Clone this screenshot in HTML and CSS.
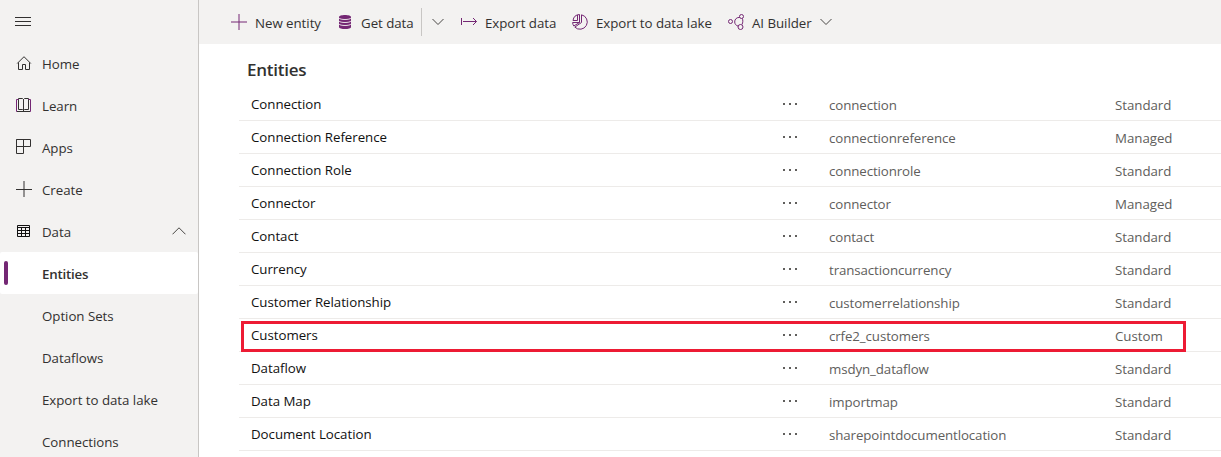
FILE: index.html
```
<!DOCTYPE html>
<html lang="en">
<head>
<meta charset="utf-8">
<title>Entities</title>
<link rel="stylesheet" href="styles.css">
</head>
<body>
<div class="app">
  <nav class="sidebar">
    <div class="menu-toggle"><svg width="16" height="10" viewBox="0 0 16 10"><path d="M0 .5h16M0 4.5h16M0 8.5h16"/></svg></div>
    <a class="nav-item"><svg class="nav-icon" viewBox="0 0 16 16"><path d="M1.200 8.500 8 1.700l6.800 6.800M2.500 7.500v7h4v-5h3v5h4v-7"/></svg><span>Home</span></a>
    <a class="nav-item"><svg class="nav-icon" viewBox="0 0 16 16"><path class="ink" d="M2.500 1.500h4l1 1 1-1h4v11h-4l-1 1-1-1h-4zM7.500 2v12"/><path class="accent" d="M2.500 2.500h-2v12h14v-12h-2"/><path class="ink" d="M1 14.500h13"/></svg><span>Learn</span></a>
    <a class="nav-item"><svg class="nav-icon" viewBox="0 0 16 16"><path d="M.5.5h14v7H.5zM7.500.5v14h-7V.5"/></svg><span>Apps</span></a>
    <a class="nav-item"><svg class="nav-icon" viewBox="0 0 16 16"><path d="M0 8.500h16M8 0v16"/></svg><span>Create</span></a>
    <a class="nav-item"><svg class="nav-icon dark" viewBox="0 0 16 16"><path d="M1.500 2.500h12v11h-12zM1 4.500h13M1 7.500h13M1 10.500h13M5.500 4v9M9.500 4v9"/></svg><span>Data</span><svg class="nav-chevron" width="14" height="8" viewBox="0 0 14 8"><path d="M.5 7.300 7 .8l6.500 6.500"/></svg></a>
    <a class="nav-item selected"><span>Entities</span></a>
    <a class="nav-item child"><span>Option Sets</span></a>
    <a class="nav-item child"><span>Dataflows</span></a>
    <a class="nav-item child"><span>Export to data lake</span></a>
    <a class="nav-item child"><span>Connections</span></a>
  </nav>
  <main class="main">
    <header class="toolbar">
      <button class="command new"><svg viewBox="0 0 16 16"><path d="M0 8h16M8 0v16"/></svg><span>New entity</span></button>
      <button class="command get"><svg viewBox="0 0 16 16"><path class="solid" d="M2 3c0-2.700 12-2.700 12 0v10c0 2.700-12 2.700-12 0z"/><path class="gap" d="M2 4c1 2 11 2 12 0M2 7c1 2 11 2 12 0M2 10c1 2 11 2 12 0"/></svg><span>Get data</span></button>
      <button class="split"><svg class="chevron" viewBox="0 0 12 8"><path d="M.5 1 6 6.500 11.500 1"/></svg></button>
      <button class="command export"><svg viewBox="0 0 16 16"><path d="M.5 4v7M2 7.500h13.500M12 4l3.500 3.500L12 11"/></svg><span>Export data</span></button>
      <button class="command lake"><svg viewBox="0 0 16 16"><path d="M9.500.8a7.300 7.300 0 1 1-6.700 12.300L9.500 8.500zM7.500.5v8l-5.700 3.500A7 7 0 0 1 .6 8.500h6.900M7.500.5A7 7 0 0 0 1 6.500h4.500V1"/></svg><span>Export to data lake</span></button>
      <button class="command builder"><svg viewBox="0 0 16 16"><circle cx="2.500" cy="7.500" r="2"/><circle cx="13.500" cy="2.500" r="2"/><circle cx="12.500" cy="13" r="2.500"/><path d="M11.700 3.500A4.300 4.300 0 0 0 6.700 8c0 2 1.300 3.500 3.500 4.200M14.300 4.400c.8 1.800.7 4-.3 6.100"/></svg><span>AI Builder</span><svg class="chevron" viewBox="0 0 12 8"><path d="M.5 1 6 6.500 11.500 1"/></svg></button>
    </header>
    <h1 class="title">Entities</h1>
    <div class="table">
      <div class="row"><span class="name">Connection</span><span class="more"><i></i><i></i><i></i></span><span class="key">connection</span><span class="type">Standard</span></div>
      <div class="row"><span class="name">Connection Reference</span><span class="more"><i></i><i></i><i></i></span><span class="key">connectionreference</span><span class="type">Managed</span></div>
      <div class="row"><span class="name">Connection Role</span><span class="more"><i></i><i></i><i></i></span><span class="key">connectionrole</span><span class="type">Standard</span></div>
      <div class="row"><span class="name">Connector</span><span class="more"><i></i><i></i><i></i></span><span class="key">connector</span><span class="type">Managed</span></div>
      <div class="row"><span class="name">Contact</span><span class="more"><i></i><i></i><i></i></span><span class="key">contact</span><span class="type">Standard</span></div>
      <div class="row"><span class="name">Currency</span><span class="more"><i></i><i></i><i></i></span><span class="key">transactioncurrency</span><span class="type">Standard</span></div>
      <div class="row"><span class="name">Customer Relationship</span><span class="more"><i></i><i></i><i></i></span><span class="key">customerrelationship</span><span class="type">Standard</span></div>
      <div class="row highlighted"><span class="name">Customers</span><span class="more"><i></i><i></i><i></i></span><span class="key">crfe2_customers</span><span class="type">Custom</span></div>
      <div class="row"><span class="name">Dataflow</span><span class="more"><i></i><i></i><i></i></span><span class="key">msdyn_dataflow</span><span class="type">Standard</span></div>
      <div class="row"><span class="name">Data Map</span><span class="more"><i></i><i></i><i></i></span><span class="key">importmap</span><span class="type">Standard</span></div>
      <div class="row"><span class="name">Document Location</span><span class="more"><i></i><i></i><i></i></span><span class="key">sharepointdocumentlocation</span><span class="type">Standard</span></div>
    </div>
  </main>
</div>
</body>
</html>
```

FILE: styles.css
```
*, *::before, *::after { box-sizing: border-box; }
body {
  margin: 0;
  overflow: hidden;
  background: #fff;
  color: #323130;
  font: 13.3px/20px "Open Sans", "Noto Sans", sans-serif;
  letter-spacing: -.04px;
}
svg { display: block; flex: none; fill: none; stroke: currentColor; stroke-width: 1; }
.app { display: flex; height: 457px; overflow: hidden; }

.sidebar { width: 199px; flex: none; background: #f3f2f1; border-right: 1px solid #c8c6c4; }
.menu-toggle { height: 42px; padding: 17px 0 0 15px; }
.nav-item { display: flex; align-items: center; height: 42px; padding: 1px 12px 0 16px; }
.nav-icon { width: 16px; height: 16px; margin: 0 10px 1px 0; }
.accent { stroke: #742774; }
.ink { stroke: #323130; }
.dark { color: #111; }
.nav-chevron { margin: 0 0 2px auto; color: #484644; }
.child { padding-left: 42px; }
.selected { position: relative; padding-left: 42px; background: #fff; border-radius: 2px; font-weight: 600; letter-spacing: -.2px; }
.selected::before { content: ""; position: absolute; left: 4px; top: 9px; width: 4px; height: 24px; border-radius: 2px; background: #742774; }

.main { flex: 1; min-width: 0; }
.toolbar { display: flex; height: 44px; padding-left: 32px; background: #f3f2f1; }
.toolbar button { display: flex; align-items: center; flex: none; padding: 0; border: 0; background: none; color: inherit; font: inherit; letter-spacing: inherit; white-space: nowrap; }
.command > svg:first-child { width: 16px; height: 16px; margin-right: 8px; color: #742774; }
.command span { padding-top: 2px; }
.new { width: 106px; }
.get { width: 84px; }
.solid { fill: #742774; stroke: none; }
.gap { stroke: #f3f2f1; stroke-width: .9; }
.toolbar .split { width: 40px; height: 28px; margin-top: 8px; padding-left: 10px; border-left: 1px solid #c8c6c4; }
.chevron { width: 12px; height: 8px; color: #484644; }
.export { width: 111px; }
.lake { width: 156px; }
.builder .chevron { margin-left: 8px; }

.title { margin: 0; padding: 14px 0 0 48px; height: 44px; font-size: 17px; line-height: 24px; font-weight: 600; letter-spacing: -.25px; }
.table { margin-left: 40px; }
.row { position: relative; display: grid; grid-template-columns: 532px 46px 286px 1fr; height: 33px; padding-left: 12px; border-bottom: 1px solid #edebe9; line-height: 32px; }
.name { color: #111; }
.key, .type { padding-top: 1px; color: #605e5c; }
.key { letter-spacing: -.1px; }
.more { display: flex; gap: 4px; padding-top: 15px; }
.more i { width: 2px; height: 2px; background: #605e5c; }
.highlighted::after { content: ""; position: absolute; left: 2px; top: 2px; width: 945px; height: 31px; border: 3px solid #ed1b34; }
```
